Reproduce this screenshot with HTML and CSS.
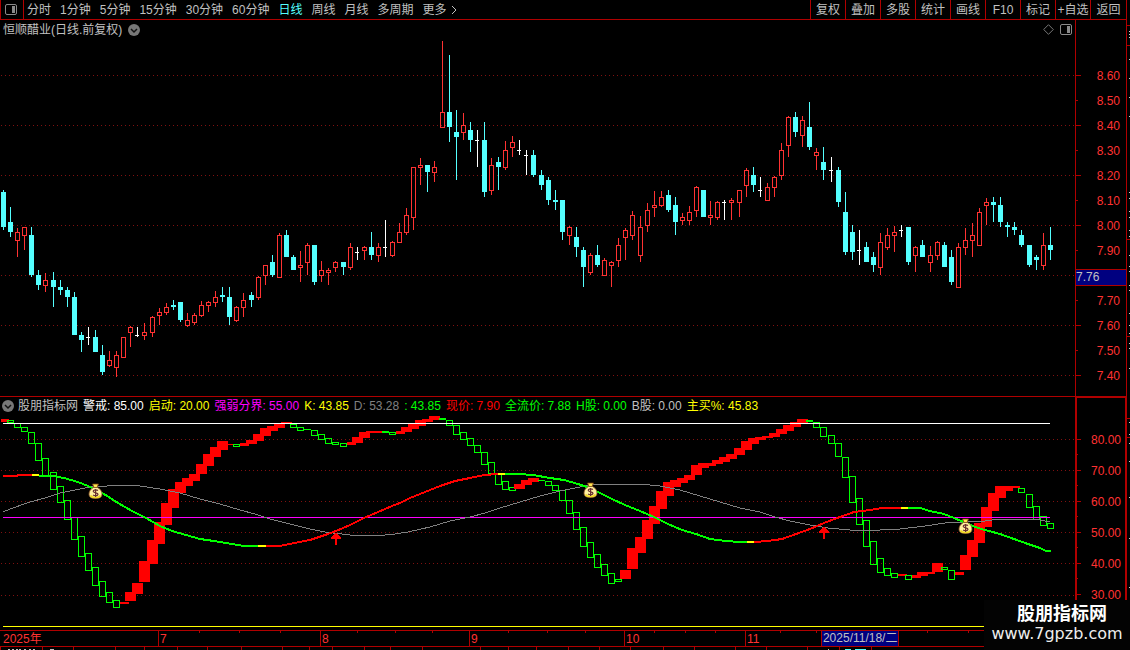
FILE: index.html
```html
<!DOCTYPE html>
<html lang="zh-CN">
<head>
<meta charset="utf-8">
<title>恒顺醋业 日线</title>
<link rel="stylesheet" href="styles.css">
</head>
<body>
<nav class="toolbar">
  <button class="tool layout-btn" aria-label="布局">
    <svg width="13" height="11" viewBox="0 0 13 11"><rect x=".5" y=".5" width="11" height="10" rx="1.5" fill="none" stroke="#8a8a8a"/><rect x="7" y="2" width="3" height="7" fill="#8a8a8a"/></svg>
  </button>
  <div class="periods">
    <button class="tool">分时</button><button class="tool">1分钟</button><button class="tool">5分钟</button><button class="tool">15分钟</button><button class="tool">30分钟</button><button class="tool">60分钟</button><button class="tool active">日线</button><button class="tool">周线</button><button class="tool">月线</button><button class="tool">多周期</button><button class="tool more">更多<svg width="6" height="10" viewBox="0 0 6 10"><path d="M1 1l4 4-4 4" fill="none" stroke="#c0c0c0"/></svg></button>
  </div>
  <div class="actions">
    <button class="tool">复权</button><button class="tool">叠加</button><button class="tool">多股</button><button class="tool">统计</button><button class="tool">画线</button><button class="tool">F10</button><button class="tool">标记</button><button class="tool">+自选</button><button class="tool">返回</button>
  </div>
</nav>

<main class="charts">
  <section class="pane">
    <header class="pane-head">
      <h1 class="title">恒顺醋业(日线.前复权)</h1>
      <svg class="fold" width="12" height="12" viewBox="0 0 12 12"><circle cx="6" cy="6" r="6" fill="#777"/><path d="M3 5l3 3 3-3" fill="none" stroke="#111" stroke-width="1.5"/></svg>
      <svg class="diamond" width="11" height="11" viewBox="0 0 11 11"><path d="M5.500 .7L10.300 5.500 5.500 10.300 .7 5.500z" fill="none" stroke="#777"/></svg>
      <svg width="12" height="11" viewBox="0 0 12 11"><rect x=".5" y=".5" width="11" height="10" rx="1.500" fill="none" stroke="#8a8a8a"/><rect x="7" y="2" width="3" height="7" fill="#8a8a8a"/></svg>
    </header>
    <svg id="price" class="plot price-plot" viewBox="0 40 1075 356" preserveAspectRatio="none"></svg>
  </section>
  <aside class="axis price-axis">
    <ol class="scale">
      <li>8.60</li><li>8.50</li><li>8.40</li><li>8.30</li><li>8.20</li><li>8.10</li><li>8.00</li><li>7.90</li><li></li><li>7.70</li><li>7.60</li><li>7.50</li><li>7.40</li>
    </ol>
    <span class="cursor-price">7.76</span>
  </aside>
  <svg id="edge1" class="edge price-edge" viewBox="1127 20 3 376"></svg>

  <section class="pane lower">
    <header class="legend">
      <svg class="fold" width="12" height="12" viewBox="0 0 12 12"><circle cx="6" cy="6" r="6" fill="#777"/><path d="M3 5l3 3 3-3" fill="none" stroke="#111" stroke-width="1.5"/></svg>
      <span class="gray">股朋指标网</span><span class="white">警戒: 85.00</span><span class="yellow">启动: 20.00</span><span class="magenta">强弱分界: 55.00</span><span class="yellow">K: 43.85</span><span class="dim">D: 53.28</span><span class="green">: 43.85</span><span class="red">现价: 7.90</span><span class="green">全流价: 7.88</span><span class="green">H股: 0.00</span><span class="gray">B股: 0.00</span><span class="yellow">主买%: 45.83</span>
    </header>
    <svg id="signal" class="plot signal-plot" viewBox="0 415 1075 215" preserveAspectRatio="none"></svg>
  </section>
  <aside class="axis signal-axis">
    <ol class="scale">
      <li>80.00</li><li>70.00</li><li>60.00</li><li>50.00</li><li>40.00</li><li>30.00</li>
    </ol>
  </aside>
  <svg id="edge2" class="edge signal-edge" viewBox="1127 396 3 234"></svg>
</main>

<footer class="dates">
  <svg id="ticks" class="ticks" viewBox="0 630 1130 20" preserveAspectRatio="none"></svg>
  <ol class="months"><li>2025年</li><li>7</li><li>8</li><li>9</li><li>10</li><li>11</li></ol>
  <span class="cursor-date">2025/11/18/二</span>
</footer>

<div class="mark"><strong class="mark-name">股朋指标网</strong><span class="mark-url">www.7gpzb.com</span></div>
<script src="chart.js"></script>
</body>
</html>
```
FILE: styles.css
```css
* { box-sizing: border-box; }
body {
  margin: 0;
  min-height: 100vh;
  position: relative;
  overflow: hidden;
  background: #000;
  color: #c0c0c0;
  font: 12px/18px "Liberation Sans", "Noto Sans CJK SC", sans-serif;
}
svg { display: block; flex: none; }
ol { list-style: none; margin: 0; padding: 0; }

.toolbar {
  display: flex;
  height: 20px;
  margin-right: 3px;
  border: solid #b00000;
  border-width: 0 1px 1px;
}
.tool {
  padding: 0;
  border: 0;
  background: none;
  color: inherit;
  font: inherit;
  white-space: nowrap;
}
.layout-btn {
  width: 23px;
  padding-left: 4px;
  border-right: 1px solid #b00000;
}
.periods { display: flex; gap: 9px; padding-left: 3px; }
.active { color: #54ffff; }
.more { display: flex; align-items: center; gap: 4px; }
.actions { display: flex; margin-left: auto; }
.actions .tool { width: 35px; border-left: 1px solid #b00000; }
.actions .tool:last-child { width: 36px; }

.charts { display: grid; grid-template-columns: 1fr 52px 3px; }
.pane { min-width: 0; }
.pane-head {
  display: flex;
  align-items: center;
  gap: 6px;
  height: 20px;
  padding: 0 3px 1px;
}
.title { margin: 0; font: inherit; }
.diamond { margin-left: auto; }
.plot { width: 100%; shape-rendering: crispEdges; }
.price-plot { height: 356px; }
.lower { border-top: 1px solid #b00000; }
.legend {
  display: flex;
  align-items: center;
  gap: 5px;
  height: 18px;
  padding: 0 0 1px 2px;
  white-space: nowrap;
}
.legend .fold { margin-right: -1px; }
.signal-plot { height: 215px; }
.gray { color: #c0c0c0; }
.white { color: #fff; }
.yellow { color: #ff0; }
.magenta { color: #f0f; }
.dim { color: #808080; }
.green { color: #0f0; }
.red { color: #f00; }

.axis {
  position: relative;
  border: solid #b00000;
  border-width: 0 1px;
  color: #ff3232;
}
.scale li {
  display: flex;
  align-items: center;
  justify-content: space-between;
  padding-right: 6px;
}
.scale li::before { content: ""; width: 5px; height: 1px; background: #b00000; }
.price-axis { padding-top: 43px; }
.price-axis li { height: 25px; }
.price-axis li:nth-child(even)::before { width: 2px; }
.cursor-price {
  position: absolute;
  top: 249px;
  left: 0;
  width: 100%;
  height: 17px;
  border: solid #b00000;
  border-width: 1px 0;
  background: #000080;
  color: #c0c0c0;
  line-height: 14px;
}
.signal-axis { padding-top: 26px; border-width: 2px 2px 0; }
.signal-axis li {
  height: 31px;
  padding-right: 4px;
  background: linear-gradient(#b00000, #b00000) left bottom / 1px 1px no-repeat;
}
.signal-axis li::before { width: 4px; }
.edge { width: 3px; shape-rendering: crispEdges; }
.price-edge { height: 376px; }
.signal-edge { height: 234px; }

.dates { position: relative; height: 20px; }
.ticks { position: absolute; inset: 0; width: 100%; height: 20px; shape-rendering: crispEdges; }
.months {
  display: grid;
  grid-template-columns: 158fr 162fr 149fr 155fr 121fr 385fr;
  height: 17px;
  border: solid #b00000;
  border-width: 1px 0;
  color: #ff3232;
  line-height: 16px;
}
.months li { border-left: 1px solid #b00000; padding-left: 1px; }
.months li:first-child { border: 0; padding-left: 3px; }
.cursor-date {
  position: absolute;
  top: 0;
  left: 72.65%;
  height: 17px;
  padding: 0 1px;
  border: 1px solid #b00000;
  background: #000080;
  line-height: 15px;
  white-space: nowrap;
}
.mark {
  position: absolute;
  right: 0;
  top: 600px;
  width: 146px;
  height: 50px;
  padding-top: 4px;
  background: #030303;
  color: #fff;
  text-align: center;
}
.mark-name, .mark-url { display: block; white-space: nowrap; }
.mark-name { padding-left: 10px; font: bold 18px/20px "Liberation Sans", "Noto Sans CJK SC", sans-serif; }
.mark-url { color: #eee; font: 16px/20px "DejaVu Sans", sans-serif; }
```
FILE: chart.js
```js
const RED = '#ff3232', CYAN = '#54ffff', GRID = '#801010', FRAME = '#b00000';
const rect = (x, y, w, h, fill) => `<rect x="${x}" y="${y}" width="${w}" height="${h}" fill="${fill}"/>`;
const box = (x, y, w, h, stroke) =>
  `<rect x="${x + .5}" y="${y + .5}" width="${w - 1}" height="${h - 1}" fill="none" stroke="${stroke}"/>`;
const grid = ys => ys.map(y => `<path d="M1 ${y + .5}H1075" stroke="${GRID}" stroke-dasharray="1 3"/>`).join('');
const rows = s => s.trim().split(/\s*;\s*/).filter(Boolean).map(r => r.split(','));

// x, high, body top, body bottom, low, kind (u up, d down, w flat)
const candles = rows(`
3,190,192,227,230,d;10,207,222,232,237,d;17,228,232,241,257,u;24,227,227,236,250,u;31,227,235,275,277,d;
38,270,275,285,290,d;45,273,280,286,292,u;53,272,280,287,307,d;60,280,287,290,295,d;67,287,290,297,307,d;
74,292,297,335,335,d;81,332,335,340,352,d;88,327,337,338,345,w;95,330,337,352,352,d;102,345,355,372,375,d;
109,351,360,366,367,u;116,351,355,368,377,u;123,337,337,358,358,u;130,326,327,333,347,u;137,327,335,336,337,w;
144,323,332,336,340,u;152,316,317,333,337,u;159,308,312,316,325,u;166,303,307,313,315,u;173,300,305,307,310,d;
180,302,302,320,322,d;187,313,320,326,327,u;194,313,315,323,325,u;201,301,305,316,317,u;208,301,302,306,312,u;
215,291,297,303,307,u;222,287,295,297,302,d;229,287,297,317,325,d;236,306,307,321,322,u;243,293,300,308,317,u;
251,292,295,300,307,d;258,276,277,298,300,u;265,265,265,276,285,u;272,255,262,275,277,d;279,233,235,278,278,u;
286,230,235,257,257,d;293,255,257,270,270,d;300,251,265,268,282,u;307,243,245,263,275,u;314,245,245,282,285,d;
321,261,270,276,282,u;328,268,270,273,285,u;335,261,262,268,272,u;343,262,262,267,275,d;350,243,247,268,270,u;
357,247,252,253,260,w;364,246,247,251,260,u;371,232,247,255,260,d;378,243,247,256,262,u;385,220,247,248,257,w;
392,241,242,256,257,u;399,223,232,243,243,u;406,208,215,233,235,u;413,167,167,218,230,u;420,158,165,168,185,u;
427,165,165,172,192,d;434,161,167,173,182,u;442,41,112,128,128,u;449,55,112,127,142,d;456,110,132,137,180,d;
463,113,125,133,140,u;470,122,130,140,152,d;477,130,140,141,167,w;484,122,140,192,197,d;491,158,165,191,195,u;
498,157,162,167,190,d;505,141,150,168,170,u;512,136,142,148,157,u;519,140,150,151,155,w;526,150,155,156,175,w;
533,150,155,175,177,d;541,170,175,185,190,d;548,177,180,200,205,d;555,190,200,202,210,d;562,200,200,232,240,d;
569,226,227,236,245,u;576,227,237,247,257,d;583,247,250,267,287,d;590,253,255,273,275,u;597,245,255,265,267,d;
604,258,260,276,276,u;611,261,262,266,287,u;618,238,245,261,267,u;625,228,230,238,260,u;632,211,215,236,240,u;
640,216,227,256,262,u;647,203,210,226,232,u;654,191,205,208,217,u;661,191,197,206,207,u;668,190,195,210,212,d;
675,197,205,222,235,d;682,213,217,221,225,u;689,206,212,221,225,u;696,186,187,211,217,u;703,190,190,217,217,d;
710,201,215,218,225,u;717,201,202,218,220,u;724,200,202,203,220,w;731,198,200,203,220,u;739,190,190,203,217,u;
746,168,170,186,197,u;753,167,175,185,192,d;760,177,190,191,197,w;767,183,187,201,201,u;774,176,177,188,197,u;
781,143,150,176,180,u;788,116,117,146,157,u;795,112,117,132,137,d;802,116,120,136,147,u;809,102,127,147,150,d;
816,148,152,156,170,u;823,147,162,170,180,d;831,157,170,171,182,w;838,167,170,202,207,d;845,192,212,252,255,d;
852,225,232,252,260,d;859,230,250,251,265,w;866,242,247,262,262,d;873,252,257,265,272,d;880,233,242,268,275,u;
887,228,235,248,250,u;894,226,232,236,252,u;901,225,230,231,237,w;908,227,227,262,265,d;915,246,247,256,272,u;
922,240,245,257,257,d;930,246,255,263,272,u;937,241,242,256,260,u;944,242,245,267,267,d;951,250,257,282,285,d;
958,243,247,288,288,u;965,228,240,248,255,u;972,223,235,241,257,u;979,208,212,246,246,u;986,198,202,206,225,u;
993,197,202,205,222,d;1000,197,205,222,227,d;1007,222,225,227,237,d;1014,222,227,230,235,d;1021,230,235,245,247,d;
1029,245,245,265,267,d;1036,255,257,260,270,d;1043,233,245,266,270,u;1050,227,245,250,260,d`);

document.getElementById('price').innerHTML = grid([75, 125, 175, 225, 275, 325, 375]) +
  candles.map(([sx, sh, st, sb, sl, kind]) => {
    const x = +sx, h = +sh, t = +st, b = +sb, l = +sl;
    if (kind === 'w') return rect(x, h, 1, l - h, '#fff') + rect(x - 2, t, 4, 1, '#fff');
    if (kind === 'd') return rect(x, h, 1, l - h, CYAN) + rect(x - 2, t, 5, b - t, CYAN);
    return rect(x, h, 1, t - h, RED) + rect(x, b, 1, l - b, RED) + box(x - 2, t, 5, b - t, RED);
  }).join('');

// Step boxes: left, right, top, bottom, kind (r filled red, g outlined green, f filled green)
const steps = rows(`
1,9,419,422,r;7,14,420,423,g;14,21,423,428,g;21,28,427,432,g;28,35,432,444,g;35,42,443,461,g;42,49,458,476,g;
50,57,472,490,g;57,64,486,503,g;64,71,500,520,g;71,78,517,540,g;78,85,536,557,g;85,92,553,571,g;92,99,567,586,g;
99,106,581,597,g;106,113,592,603,g;113,120,600,608,g;120,129,602,604,r;125,136,592,601,r;132,143,583,594,r;
139,150,561,582,r;147,158,540,564,r;154,165,522,544,r;161,172,503,525,r;168,179,489,508,r;175,186,482,493,r;
182,193,478,486,r;189,200,474,481,r;196,207,464,474,r;203,214,454,466,r;210,221,447,457,r;217,228,441,450,r;
228,233,444,445,r;233,240,444,447,g;240,249,443,446,r;246,257,440,444,r;253,264,434,441,r;260,271,428,436,r;
267,278,426,431,r;274,285,423,428,r;281,292,422,424,r;290,297,424,428,g;297,304,427,431,g;304,311,429,430,f;
311,318,430,436,g;318,325,434,440,g;325,332,438,444,g;332,339,442,445,g;340,347,443,447,g;347,356,442,445,r;
352,363,437,443,r;359,370,432,438,r;366,382,431,433,r;382,389,431,433,f;389,396,432,435,g;396,405,431,434,r;
401,412,427,432,r;408,419,424,429,r;415,426,420,426,r;422,433,419,422,r;429,440,416,420,r;439,446,418,420,f;
446,453,420,426,g;453,460,425,435,g;460,467,432,440,g;467,474,438,446,g;474,481,445,453,g;481,488,452,465,g;
488,495,462,474,g;495,502,473,485,g;502,509,481,490,g;509,516,487,491,g;514,525,484,489,r;521,532,480,485,r;
528,539,478,482,r;538,545,480,481,f;545,552,481,486,g;552,559,485,491,g;559,566,490,501,g;566,573,500,514,g;
573,580,512,530,g;580,587,527,547,g;587,594,542,558,g;594,601,554,568,g;601,608,564,576,g;608,615,573,584,g;
615,622,579,582,g;620,631,570,579,r;627,638,548,569,r;635,646,537,553,r;642,653,520,539,r;649,660,506,524,r;
656,667,491,509,r;663,674,482,496,r;670,681,480,487,r;677,688,478,483,r;684,695,475,480,r;691,702,465,475,r;
698,709,463,468,r;705,716,463,466,r;712,723,460,464,r;719,730,457,462,r;726,737,454,459,r;734,745,448,455,r;
741,752,441,450,r;748,759,438,444,r;755,766,437,440,r;762,773,436,438,r;769,780,433,437,r;776,787,429,434,r;
783,794,425,431,r;790,801,422,427,r;797,808,419,424,r;806,813,420,422,f;813,820,422,428,g;820,827,427,437,g;
828,835,435,444,g;835,842,443,457,g;842,849,457,478,g;849,856,476,503,g;856,863,498,525,g;863,870,520,547,g;
870,877,541,565,g;877,884,558,573,g;884,891,568,576,g;891,898,573,578,g;898,907,574,576,r;905,912,575,580,g;
912,921,575,578,r;917,928,572,576,r;924,935,572,574,r;932,943,563,572,r;941,948,567,570,g;948,955,570,580,g;
955,964,572,575,r;960,971,555,570,r;967,978,540,557,r;974,985,523,543,r;981,992,507,527,r;988,999,493,511,r;
995,1006,486,498,r;1002,1013,486,491,r;1009,1020,486,488,r;1018,1025,488,493,g;1026,1033,494,508,g;
1033,1040,506,520,g;1040,1047,516,526,g;1047,1054,523,529,g`);

const line = (pts, stroke, width) => `<polyline points="${pts}" fill="none" stroke="${stroke}" stroke-width="${width}"/>`;
const trend = [
  ['#f00', '3,476 17,476 18,475 32,475'],
  ['#0f0', '39,476 53,476 64,478 78,482 88,486 96,490 104,494 118,503 132,511 146,518 160,526 172,531 186,535 200,539 214,541 232,544 244,546 258,546'],
  ['#f00', '266,546 280,546 294,543 310,540 325,535 336,531 350,525 364,518 378,512 392,506 400,503 410,498 425,492 440,486 455,481 470,478 484,475 498,474'],
  ['#0f0', '505,474 519,474 533,475 550,478 564,480 578,484 590,488 600,493 612,499 625,505 640,511 654,517 668,524 682,530 696,534 710,539 726,541 740,542 747,542'],
  ['#f00', '754,542 768,541 782,539 796,534 810,529 824,523 840,517 854,512 870,510 882,508 901,508'],
  ['#0f0', '908,508 920,508 930,511 944,514 954,518 966,523 975,527 985,530 1000,534 1014,539 1028,544 1040,548 1046,551 1051,551'],
  ['#ff0', '32,475 39,475'], ['#ff0', '258,546 266,546'], ['#ff0', '498,474 505,474'],
  ['#ff0', '747,542 754,542'], ['#ff0', '901,508 908,508'],
];
const slow = '3,512 10,509 30,502 45,498 60,493 75,490 90,487 107,486 125,485 140,486 160,489 180,493 200,499 220,504 240,510 255,514 270,519 290,524 310,529 325,532 350,535 375,536 395,534 408,532 430,527 450,521 470,517 485,513 500,508 520,502 540,496 560,491 580,487 592,485 620,484 640,484 660,486 680,490 700,496 720,502 740,508 760,512 775,517 790,521 810,525 828,528 850,530 880,530 900,529 925,526 945,523 965,522 985,521 1000,519 1020,519 1040,520 1050,522';

const bag = (x, y) => `<g transform="translate(${x} ${y})" shape-rendering="auto">
  <path d="M3.500 1h6L8 4.500H5z" fill="#ffe850" stroke="#7a3a10" stroke-width=".8"/>
  <path d="M4.500 4.500h4C11.500 6 13 8.500 13 11c0 3-2 4.500-6.500 4.500S0 14 0 11c0-2.500 1.500-5 4.500-6.500z" fill="#fff0a0" stroke="#8a5020" stroke-width=".8"/>
  <path d="M1.500 12.500c1.500 2.500 8.500 2.500 10 0" fill="none" stroke="#f0d820" stroke-width="1.500"/>
  <path d="M9 7.500C7.500 6.500 4.200 6.600 4.200 8.300c0 2 4.800 1 4.800 2.900C9 13 5.500 12.900 4 12M6.600 6v8" fill="none" stroke="#6a3030" stroke-width="1.200"/></g>`;
const arrow = (x, y) => `<path d="M${x} ${y}l5 6v1h-4v6h-2v-6h-4v-1z" fill="#f00"/>`;

document.getElementById('signal').innerHTML = grid([439, 470, 501, 532, 563, 595]) +
  steps.map(([l, r, t, b, kind]) => kind === 'g' ? box(+l, +t, r - l, b - t, '#0f0')
    : rect(l, t, r - l, b - t, kind === 'r' ? '#f00' : '#0f0')).join('') +
  rect(3, 423, 1047, 1, '#fff') + rect(3, 517, 1047, 1, '#f0f') + rect(3, 626, 1072, 1, '#ff0') +
  line(slow, '#808080', 1) + trend.map(([c, p]) => line(p, c, 2)).join('') +
  arrow(336, 532) + arrow(824, 526) + bag(89, 483) + bag(584, 482) + bag(959, 518);

const marks = (ys, color, x, w) => ys.map(y => rect(x, y, w, 1, color)).join('');
document.getElementById('edge1').innerHTML = marks([25, 45, 239, 336], FRAME, 1127, 3) +
  marks([31, 34, 37, 59, 78, 97, 116, 192, 198, 211, 217, 230, 236, 255, 266, 271, 285, 290, 313, 325, 333, 343, 348, 368], '#ccc', 1129, 1);
document.getElementById('edge2').innerHTML = marks([418, 437], FRAME, 1127, 3) +
  marks([422, 434, 443, 461, 497, 538, 587], '#ccc', 1129, 1);

const vticks = (xs, y, h) => xs.map(x => rect(x, y, 1, h, FRAME)).join('');
document.getElementById('ticks').innerHTML =
  vticks([199, 239, 280, 357, 395, 432, 508, 547, 585, 654, 685, 715, 780, 816, 927, 968], 631, 2) +
  vticks([0, 42, 73, 115, 144, 177, 207, 241, 282, 309, 332, 364, 390, 422, 480, 508, 536, 568, 599, 630, 663, 694, 735, 766, 807, 839, 871], 647, 3) +
  [8, 12, 16, 19, 24, 29, 33, 50, 52].map(x => rect(x, 649, 2, 1, '#c0c0c0')).join('') +
  rect(828, 649, 1, 1, '#c0c0c0') + rect(845, 649, 6, 1, CYAN) + rect(855, 649, 11, 1, CYAN);
```
